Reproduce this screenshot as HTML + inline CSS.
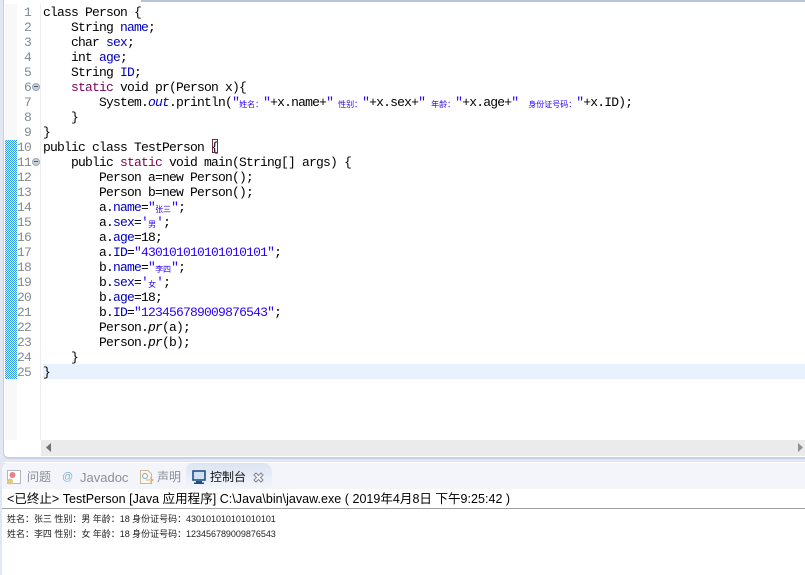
<!DOCTYPE html>
<html><head><meta charset="utf-8"><style>
html,body{margin:0;padding:0}
body{width:805px;height:575px;overflow:hidden;background:#e2e7f3;position:relative;font-family:"Liberation Mono","Noto Sans CJK SC",monospace}
.a{position:absolute}
#ed{left:3px;top:0;width:802px;height:459px;background:#fff;border-left:1px solid #c8d0e0;border-bottom:2px solid #c8d0e4;border-bottom-left-radius:6px;box-sizing:border-box;overflow:hidden}
.l{position:absolute;left:43px;height:15px;line-height:15px;font-size:13px;letter-spacing:-.8px;white-space:pre;color:#000}
.n{position:absolute;left:16px;width:15px;text-align:right;height:15px;line-height:15px;font-size:13px;letter-spacing:-.8px;color:#808a94}
.k{color:#7f0055}.f{color:#0000c0}.s{color:#2a00ff}.i{font-style:italic}
.c{font-size:8px;line-height:10px;letter-spacing:0;font-family:"Noto Sans CJK SC",sans-serif;display:inline-block;vertical-align:-1px;white-space:nowrap}
.r{text-align:right}
.ui{font-family:"Liberation Sans","Noto Sans CJK SC",sans-serif;white-space:pre}
.fold{position:absolute;left:32px;width:8px;height:8px;border-radius:50%;background:#c8d0da;border:1px solid #9aa8b8;box-sizing:border-box}
.fold:after{content:"";position:absolute;left:1px;top:2px;width:4px;height:1px;background:#4a5868}
</style></head><body>
<div class="a" id="ed"></div>
<div class="a" style="left:141px;top:0;width:664px;height:2px;background:#b8c4d8"></div>
<div class="a" style="left:5px;top:4px;width:12px;height:436px;background:#f8f8f8"></div>
<div class="a" style="left:40px;top:4px;width:1px;height:436px;background:#eee"></div>
<div class="a" style="left:5px;top:140px;width:12px;height:239px;background:repeating-conic-gradient(#3399ee 0 25%,#d8ecfb 0 50%) 0 0/2px 2px"></div>
<div class="a" style="left:43px;top:364px;width:762px;height:15px;background:#e8f2fe"></div>

<div class="n" style="top:5px">1</div><div class="n" style="top:20px">2</div><div class="n" style="top:35px">3</div><div class="n" style="top:50px">4</div><div class="n" style="top:65px">5</div><div class="n" style="top:80px">6</div><div class="n" style="top:95px">7</div><div class="n" style="top:110px">8</div><div class="n" style="top:125px">9</div><div class="n" style="top:140px">10</div><div class="n" style="top:155px">11</div><div class="n" style="top:170px">12</div><div class="n" style="top:185px">13</div><div class="n" style="top:200px">14</div><div class="n" style="top:215px">15</div><div class="n" style="top:230px">16</div><div class="n" style="top:245px">17</div><div class="n" style="top:260px">18</div><div class="n" style="top:275px">19</div><div class="n" style="top:290px">20</div><div class="n" style="top:305px">21</div><div class="n" style="top:320px">22</div><div class="n" style="top:335px">23</div><div class="n" style="top:350px">24</div><div class="n" style="top:365px">25</div>
<div class="fold" style="top:83px"></div><div class="fold" style="top:158px"></div>

<div class="l" style="top:5px">class Person {</div>
<div class="l" style="top:20px">    String <span class="f">name</span>;</div>
<div class="l" style="top:35px">    char <span class="f">sex</span>;</div>
<div class="l" style="top:50px">    int <span class="f">age</span>;</div>
<div class="l" style="top:65px">    String <span class="f">ID</span>;</div>
<div class="l" style="top:80px">    <span class="k">static</span> void pr(Person x){</div>
<div class="l" style="top:95px">        System.<span class="f i">out</span>.println(<span class="s">"</span><span class="s c r" style="width:24px">姓名：</span><span class="s">"</span>+x.name+<span class="s">"</span><span class="s c r" style="width:29px">性别：</span><span class="s">"</span>+x.sex+<span class="s">"</span><span class="s c r" style="width:30px">年龄：</span><span class="s">"</span>+x.age+<span class="s">"</span><span class="s c r" style="width:58px">身份证号码：</span><span class="s">"</span>+x.ID);</div>
<div class="l" style="top:110px">    }</div>
<div class="l" style="top:125px">}</div>
<div class="l" style="top:140px">public class TestPerson {</div>
<div class="a" style="left:212px;top:139px;width:6px;height:14px;border:1px solid #6a2a50;box-sizing:border-box"></div>
<div class="l" style="top:155px">    public <span class="k">static</span> void main(String[] args) {</div>
<div class="l" style="top:170px">        Person a=new Person();</div>
<div class="l" style="top:185px">        Person b=new Person();</div>
<div class="l" style="top:200px">        a.<span class="f">name</span>=<span class="s">"<span class="c" style="width:16px">张三</span>"</span>;</div>
<div class="l" style="top:215px">        a.<span class="f">sex</span>=<span class="s">'<span class="c" style="width:8px">男</span>'</span>;</div>
<div class="l" style="top:230px">        a.<span class="f">age</span>=18;</div>
<div class="l" style="top:245px">        a.<span class="f">ID</span>=<span class="s">"430101010101010101"</span>;</div>
<div class="l" style="top:260px">        b.<span class="f">name</span>=<span class="s">"<span class="c" style="width:16px">李四</span>"</span>;</div>
<div class="l" style="top:275px">        b.<span class="f">sex</span>=<span class="s">'<span class="c" style="width:8px">女</span>'</span>;</div>
<div class="l" style="top:290px">        b.<span class="f">age</span>=18;</div>
<div class="l" style="top:305px">        b.<span class="f">ID</span>=<span class="s">"123456789009876543"</span>;</div>
<div class="l" style="top:320px">        Person.<span class="i">pr</span>(a);</div>
<div class="l" style="top:335px">        Person.<span class="i">pr</span>(b);</div>
<div class="l" style="top:350px">    }</div>
<div class="l" style="top:365px">}</div>

<div class="a" style="left:41px;top:440px;width:764px;height:16px;background:#ebebeb"></div>
<svg class="a" style="left:46px;top:443px" width="6" height="10"><path d="M5 0V9L0 4.5Z" fill="#707070"/></svg>
<svg class="a" style="left:797px;top:443px" width="6" height="10"><path d="M1 0V9L6 4.5Z" fill="#909090"/></svg>

<div class="a" style="left:4px;top:462px;width:801px;height:1px;background:#fff"></div>
<div class="a" style="left:2px;top:463px;width:803px;height:26px;background:#f3f5fb;border-top-left-radius:6px"></div>
<svg class="a" style="left:6px;top:469px" width="16" height="16"><rect x="1.5" y="1.5" width="13" height="13" fill="#fff" stroke="#b0b8c0"/><circle cx="6.5" cy="6" r="3" fill="#e8808a"/><circle cx="4" cy="12.5" r="3" fill="#e8c878"/></svg>
<div class="a ui" style="left:27px;top:469px;font-size:12px;line-height:17px;color:#8a8f96">问题</div>
<div class="a ui" style="left:62px;top:469px;font-size:11px;line-height:17px;color:#88b0d4">@</div>
<div class="a ui" style="left:80px;top:469px;font-size:13px;line-height:17px;color:#8a8f96">Javadoc</div>
<svg class="a" style="left:138px;top:469px" width="16" height="16"><path d="M2.5 1.5H10L13.5 5V14.5H2.5Z" fill="#fbf8f0" stroke="#cdb896"/><path d="M8 11H15M12 8.5L15 11L12 13.5" fill="none" stroke="#d8b070"/><circle cx="7" cy="7" r="2.5" fill="none" stroke="#7ea6c8"/></svg>
<div class="a ui" style="left:157px;top:469px;font-size:12px;line-height:17px;color:#8a8f96">声明</div>
<div class="a" style="left:186px;top:463px;width:86px;height:26px;background:linear-gradient(#dce5f2,#f3f5fb);border-radius:7px 9px 0 0"></div>
<svg class="a" style="left:192px;top:470px" width="14" height="14"><rect x="1" y="1" width="12" height="9" fill="#cfe0f2" stroke="#1f4f86" stroke-width="1.6"/><rect x="4" y="11" width="6" height="1.5" fill="#1f4f86"/><rect x="2" y="12.5" width="10" height="1.5" fill="#1f4f86"/></svg>
<div class="a ui" style="left:210px;top:469px;font-size:12px;line-height:17px;color:#101418">控制台</div>
<svg class="a" style="left:253px;top:472px" width="11" height="11"><path d="M1 3L3 1L5.5 3.5L8 1L10 3L7.5 5.5L10 8L8 10L5.5 7.5L3 10L1 8L3.5 5.5Z" fill="#f6f7fa" stroke="#808890"/></svg>

<div class="a" style="left:2px;top:489px;width:803px;height:86px;background:#fff"></div>
<div class="a ui" style="left:7px;top:491px;font-size:12.5px;line-height:17px;letter-spacing:.03px;color:#000">&lt;已终止&gt; TestPerson [Java 应用程序] C:\Java\bin\javaw.exe ( 2019年4月8日 下午9:25:42 )</div>
<div class="a" style="left:2px;top:508px;width:803px;height:1px;background:#a0a0a0"></div>
<div class="a ui" style="left:7px;top:512px;font-size:9px;line-height:14px;letter-spacing:-.02px;color:#222">姓名：张三 性别：男 年龄：18 身份证号码：430101010101010101</div>
<div class="a ui" style="left:7px;top:527px;font-size:9px;line-height:14px;letter-spacing:-.02px;color:#222">姓名：李四 性别：女 年龄：18 身份证号码：123456789009876543</div>
</body></html>
